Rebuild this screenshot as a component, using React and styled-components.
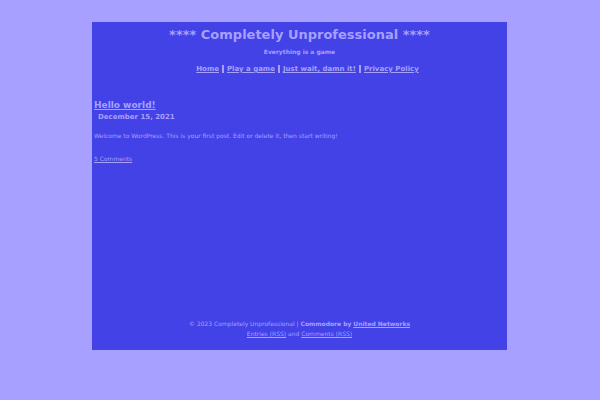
import React from 'react';
import styled, { createGlobalStyle } from 'styled-components';

const GlobalStyle = createGlobalStyle`
  body {
    margin: 0;
    background-color: #a7a0ff;
    color: #a7a0ff;
    font-family: "DejaVu Sans", Verdana, sans-serif;
    font-size: 6px;
    line-height: 10px;
  }
`;

const Page = styled.div`
  display: flex;
  flex-direction: column;
  min-height: 328px;
  margin: 22px 93px 50px 92px;
  background-color: #4242e6;
`;

const Header = styled.header`
  padding-top: 4px;
  text-align: center;
`;

const Title = styled.h1`
  margin: 0;
  font-size: 13px;
  line-height: 18px;
`;

const Tagline = styled.p`
  margin: 3px 0 6px;
  font-size: 6px;
  font-weight: bold;
`;

const Menu = styled.nav`
  display: flex;
  justify-content: center;
  gap: 3px;
  padding-left: 16px;
  font-size: 7px;
  font-weight: bold;
  line-height: 12px;
`;

const Separator = styled.span`
  width: 2px;
  height: 8px;
  margin-top: 2px;
  background-color: #a7a0ff;
`;

const Link = styled.a`
  color: inherit;
  font-weight: ${(props) => (props.$bold ? 'bold' : 'inherit')};
  text-decoration: underline;

  &:hover {
    color: #ffffff;
  }
`;

const Post = styled.article`
  flex: 1;
  padding: 23px 2px 0;
`;

const PostTitle = styled.h2`
  margin: 0;
  font-size: 9px;
  line-height: 14px;
`;

const PostDate = styled.p`
  margin: 0 0 9px 4px;
  font-size: 7px;
  font-weight: bold;
`;

const Text = styled.p`
  margin: 0 0 13px;
`;

const Footer = styled.footer`
  padding-bottom: 11px;
  text-align: center;
`;

const FooterLine = styled.p`
  margin: 0;
`;

const pages = ['Home', 'Play a game', 'Just wait, damn it!', 'Privacy Policy'];

const App = () => {
  return (
    <>
      <GlobalStyle />
      <Page>
        <Header>
          <Title>**** Completely Unprofessional ****</Title>
          <Tagline>Everything is a game</Tagline>
          <Menu>
            {pages.map((page, index) => (
              <React.Fragment key={page}>
                {index > 0 && <Separator />}
                <Link href="#">{page}</Link>
              </React.Fragment>
            ))}
          </Menu>
        </Header>
        <Post>
          <PostTitle>
            <Link href="#">Hello world!</Link>
          </PostTitle>
          <PostDate>December 15, 2021</PostDate>
          <Text>Welcome to WordPress. This is your first post. Edit or delete it, then start writing!</Text>
          <Link href="#">5 Comments</Link>
        </Post>
        <Footer>
          <FooterLine>
            © 2023 Completely Unprofessional | <b>Commodore by</b> <Link href="#" $bold>United Networks</Link>
          </FooterLine>
          <FooterLine>
            <Link href="#">Entries (RSS)</Link> and <Link href="#">Comments (RSS)</Link>
          </FooterLine>
        </Footer>
      </Page>
    </>
  );
};

export default App;
